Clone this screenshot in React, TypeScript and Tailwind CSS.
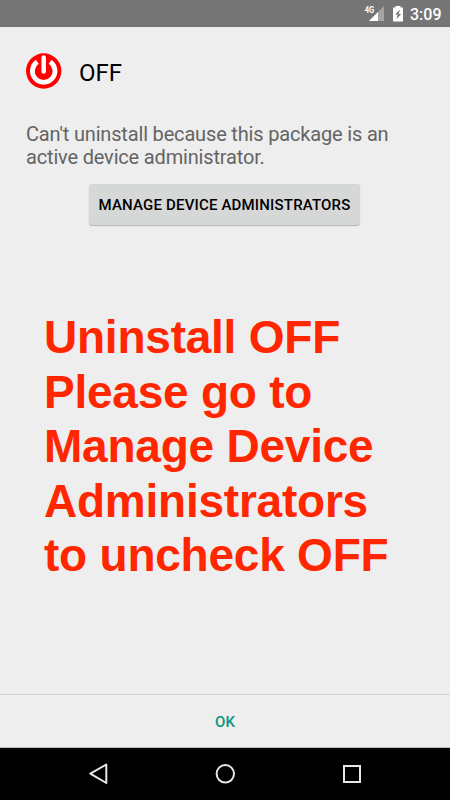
function StatusBar() {
  return (
    <div className="flex h-[27px] items-center justify-end bg-[#757575] pr-[9px] text-white">
      <svg className="h-[27px] w-[60px]" viewBox="0 0 60 27">
        <text x="14.700" y="13" fontSize="8.500" fontWeight="700" textLength="9.500" lengthAdjust="spacingAndGlyphs" fill="#fff" className="font-['Roboto',sans-serif]">
          4G
        </text>
        <path d="M34 6v15H19z" fill="#fff" opacity=".35" />
        <path d="M28 12V21H19z" fill="#fff" />
        <path d="M45.5 6h5v1.500H53V21.500H43V7.500h2.500z" fill="#fff" />
        <path d="M50 9.500l-4.800 5h2.500l-1.200 4.500L51.200 14h-2.700z" fill="#757575" />
      </svg>
      <span className="mt-[2px] w-[31px] text-right text-[16px] leading-[27px] font-medium whitespace-nowrap">3:09</span>
    </div>
  );
}

function PowerIcon() {
  return (
    <svg className="h-9 w-9" viewBox="0 0 36 36">
      <circle cx="17.700" cy="18" r="17.700" fill="#f00" />
      <path d="M11.300 8.700a11.300 11.300 0 1 0 12.800 0" fill="none" stroke="#fff" strokeWidth="4.800" />
      <path d="M17.700 4.600v13.800" stroke="#fff" strokeWidth="4.500" strokeLinecap="round" />
    </svg>
  );
}

function NavBar() {
  return (
    <nav className="h-[52px] bg-black">
      <svg className="h-[52px] w-[450px]" viewBox="0 0 450 52" fill="none" stroke="#e8e8e8" strokeWidth="2">
        <path d="M106.300 16.500v18.500L90.300 25.700z" strokeLinejoin="round" />
        <circle cx="225.300" cy="25.800" r="8.700" />
        <path d="M344 18h16v16h-16z" />
      </svg>
    </nav>
  );
}

const lines = ["Uninstall OFF", "Please go to", "Manage Device", "Administrators", "to uncheck OFF"];

export default function App() {
  return (
    <div className="flex h-[800px] w-[450px] flex-col overflow-hidden bg-[#eeeeee] font-['Roboto',sans-serif]">
      <StatusBar />
      <main className="flex flex-1 flex-col">
        <header className="flex items-center gap-[17px] pt-[26px] pl-[26px]">
          <PowerIcon />
          <h1 className="mt-[4px] h-[32px] text-[24px] leading-[32px] text-black">OFF</h1>
        </header>
        <p className="mt-[34px] pl-[26px] text-[20px] leading-[23px] tracking-[-0.17px] text-[#646464]">
          Can't uninstall because this package is an
          <br />
          active device administrator.
        </p>
        <button className="mt-[15px] ml-[89px] h-[41px] w-[271px] rounded-[3px] bg-[#d6d7d7] pt-[2px] text-[15px] font-medium tracking-[0.18px] whitespace-nowrap text-black shadow-[0_1px_1px_rgba(0,0,0,0.25)]">
          MANAGE DEVICE ADMINISTRATORS
        </button>
        <div className="mt-[85px] pl-[44px] font-['Liberation_Sans',Arial,sans-serif] text-[46px] leading-[54.5px] font-bold tracking-[-0.23px] text-[#ff2600]">
          {lines.map((line) => (
            <div key={line} className="whitespace-nowrap">
              {line}
            </div>
          ))}
        </div>
      </main>
      <footer className="h-[54px] border-t border-b border-t-[#cfcfcf] border-b-[#bdbdbd] text-center">
        <button className="h-[52px] pt-[2px] text-[15px] font-medium text-[#099481]">OK</button>
      </footer>
      <NavBar />
    </div>
  );
}
